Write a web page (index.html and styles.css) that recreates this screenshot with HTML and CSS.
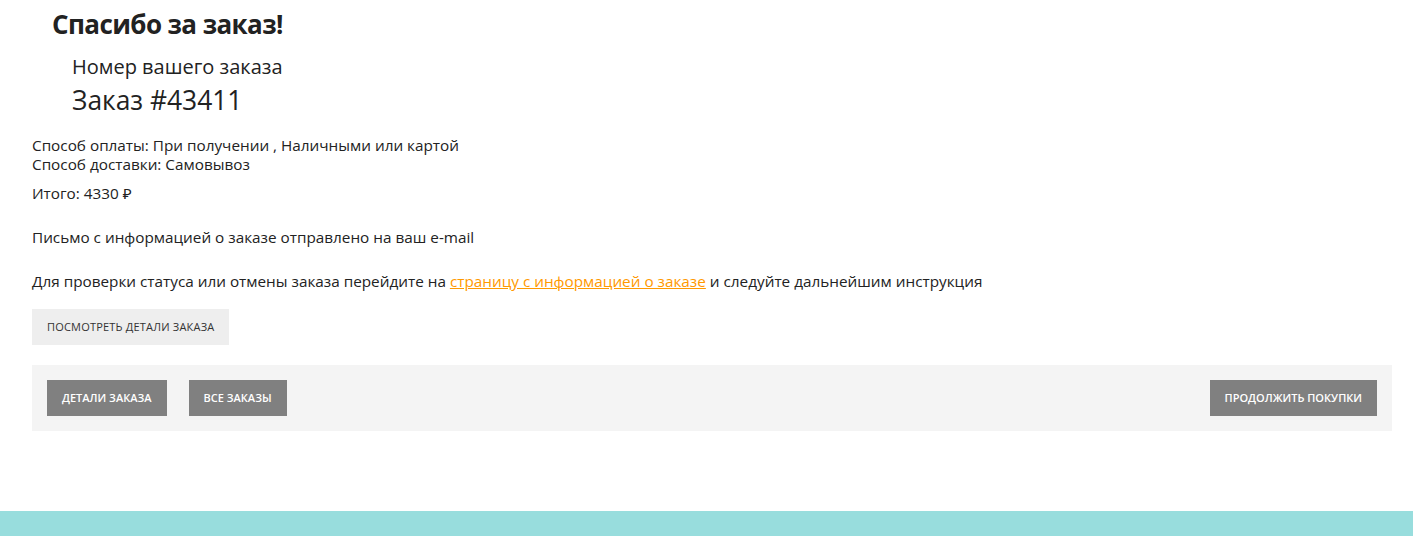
FILE: index.html
```html
<!DOCTYPE html>
<html lang="ru">
<head>
	<meta charset="UTF-8">
	<title>Спасибо за заказ</title>
	<link rel="stylesheet" href="styles.css">
</head>
<body>
	<div class="page">
		<h1 class="title">Спасибо за заказ!</h1>
		<div class="order-num">
			<div class="order-label">Номер вашего заказа</div>
			<div class="order-id">Заказ #43411</div>
		</div>
		<div class="info">
			<p class="info-lines">Способ оплаты: При получении , Наличными или картой<br>Способ доставки: Самовывоз</p>
			<p class="total">Итого: 4330 ₽</p>
			<p class="mail">Письмо с информацией о заказе отправлено на ваш e-mail</p>
			<p class="status">Для проверки статуса или отмены заказа перейдите на <a href="#">страницу с информацией о заказе</a> и следуйте дальнейшим инструкция</p>
			<a class="btn-light" href="#">Посмотреть детали заказа</a>
		</div>
		<div class="actions">
			<div class="actions-left">
				<a class="btn-gray" href="#">Детали заказа</a>
				<a class="btn-gray" href="#">Все заказы</a>
			</div>
			<a class="btn-gray" href="#">Продолжить покупки</a>
		</div>
	</div>
	<div class="footer"></div>
</body>
</html>
```

FILE: styles.css
```css
html, body {margin: 0;padding: 0;}
body {font-family: "Open Sans", "Noto Sans", sans-serif;color: #222;background: #fff;}
.page {width: 1360px;padding: 0 0 0 32px;height: 511px;box-sizing: content-box;}
.title {margin: 0;padding: 6px 0 0 20px;font-size: 26px;font-weight: 700;line-height: 36px;letter-spacing: -0.6px;}
.order-num {padding: 13px 0 0 40px;}
.order-label {font-size: 20px;line-height: 24px;}
.order-id {font-size: 26.4px;line-height: 34px;margin-top: 4px;}
.info {padding-top: 19px;font-size: 15.3px;}
.info p {margin: 0;}
.info-lines {line-height: 19px;}
.total {margin-top: 9px !important;line-height: 20px;}
.mail {margin-top: 24px !important;line-height: 20px;}
.status {margin-top: 24px !important;line-height: 20px;}
.status a {color: #f90;}
.btn-light {display: inline-block;margin-top: 18px;height: 36px;line-height: 36px;padding: 0 15px;background: #eee;color: #333;font-size: 11px;letter-spacing: 0.2px;text-transform: uppercase;text-decoration: none;}
.actions {margin-top: 20px;background: #f4f4f4;padding: 15px;display: flex;justify-content: space-between;}
.actions-left {display: flex;gap: 22px;}
.btn-gray {display: inline-block;height: 36px;line-height: 36px;padding: 0 15px;background: #808080;color: #fff;font-size: 11px;font-weight: 600;text-transform: uppercase;text-decoration: none;}
.footer {height: 25px;background: #98dddd;}
```
